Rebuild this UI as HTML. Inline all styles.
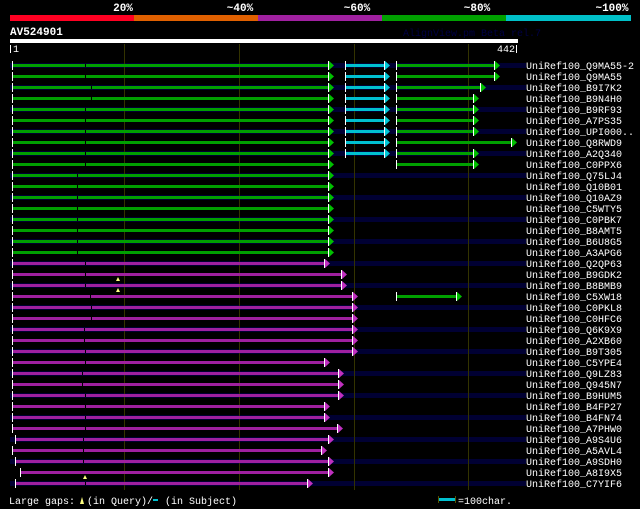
<!DOCTYPE html>
<html><head><meta charset="utf-8"><style>
html,body{margin:0;padding:0;background:#000;}
svg{display:block}
text{font-family:"Liberation Mono",monospace;}
</style></head><body>
<svg width="640" height="509" viewBox="0 0 640 509" xmlns="http://www.w3.org/2000/svg" shape-rendering="crispEdges">
<rect width="640" height="509" fill="#000"/>
<rect x="10" y="15" width="124" height="6" fill="#ff0022"/>
<rect x="134" y="15" width="124" height="6" fill="#e06000"/>
<rect x="258" y="15" width="124" height="6" fill="#a020a0"/>
<rect x="382" y="15" width="124" height="6" fill="#00a000"/>
<rect x="506" y="15" width="125" height="6" fill="#00c0c8"/>
<g fill="#fff" font-weight="bold" font-size="11" text-anchor="middle">
<text x="123" y="11">20%</text><text x="240" y="11">~40%</text><text x="357" y="11">~60%</text><text x="477" y="11">~80%</text><text x="612" y="11">~100%</text>
</g>
<text x="10" y="35" fill="#fff" font-weight="bold" font-size="11">AV524901</text>
<text x="403" y="36" fill="#000044" font-size="10">AlignView.pm Beta rel.7</text>
<rect x="10" y="39" width="508" height="4" fill="#fff"/>
<rect x="10" y="45" width="1" height="8" fill="#fff"/>
<text x="13" y="52" fill="#fff" font-size="10">1</text>
<rect x="516" y="45" width="1" height="8" fill="#fff"/>
<text x="515" y="52" fill="#fff" font-size="10" text-anchor="end">442</text>
<g fill="#000033">
<rect x="10" y="63" width="516" height="5"/><rect x="10" y="85" width="516" height="5"/><rect x="10" y="107" width="516" height="5"/><rect x="10" y="129" width="516" height="5"/><rect x="10" y="151" width="516" height="5"/><rect x="10" y="173" width="516" height="5"/><rect x="10" y="195" width="516" height="5"/><rect x="10" y="217" width="516" height="5"/><rect x="10" y="239" width="516" height="5"/><rect x="10" y="261" width="516" height="5"/><rect x="10" y="283" width="516" height="5"/><rect x="10" y="305" width="516" height="5"/><rect x="10" y="327" width="516" height="5"/><rect x="10" y="349" width="516" height="5"/><rect x="10" y="371" width="516" height="5"/><rect x="10" y="393" width="516" height="5"/><rect x="10" y="415" width="516" height="5"/><rect x="10" y="437" width="516" height="5"/><rect x="10" y="459" width="516" height="5"/><rect x="10" y="481" width="516" height="5"/>
</g>
<g fill="#333300">
<rect x="124" y="44" width="1" height="446"/><rect x="239" y="44" width="1" height="446"/><rect x="354" y="44" width="1" height="446"/><rect x="468" y="44" width="1" height="446"/>
</g>
<defs>
<g id="ag"><rect x="0" y="-4" width="1" height="9" fill="#fff"/><polygon points="1,-4 1,5 6,0.5" fill="#00c000" shape-rendering="auto"/></g>
<g id="ap"><rect x="0" y="-4" width="1" height="9" fill="#fff"/><polygon points="1,-4 1,5 6,0.5" fill="#c030c0" shape-rendering="auto"/></g>
<g id="ac"><rect x="0" y="-4" width="1" height="9" fill="#fff"/><polygon points="1,-4 1,5 6,0.5" fill="#00c8d8" shape-rendering="auto"/></g>
<rect id="tk" x="0" y="-4" width="1" height="9" fill="#fff"/>
<polygon id="ym" points="0,7 2,3 4,7" fill="#ffff80"/>
</defs>
<g>
<g transform="translate(0,65)"><rect x="12" y="-1" width="316" height="3" fill="#00a000"/><rect x="85" y="-1" width="1" height="3" fill="#000"/><use href="#tk" x="12"/><use href="#ag" x="328"/><rect x="345" y="-1" width="39" height="3" fill="#00c0d0"/><use href="#tk" x="345"/><use href="#ac" x="384"/><rect x="396" y="-1" width="98" height="3" fill="#00a000"/><use href="#tk" x="396"/><use href="#ag" x="494"/></g>
<g transform="translate(0,76)"><rect x="12" y="-1" width="316" height="3" fill="#00a000"/><rect x="85" y="-1" width="1" height="3" fill="#000"/><use href="#tk" x="12"/><use href="#ag" x="328"/><rect x="345" y="-1" width="39" height="3" fill="#00c0d0"/><use href="#tk" x="345"/><use href="#ac" x="384"/><rect x="396" y="-1" width="98" height="3" fill="#00a000"/><use href="#tk" x="396"/><use href="#ag" x="494"/></g>
<g transform="translate(0,87)"><rect x="12" y="-1" width="316" height="3" fill="#00a000"/><rect x="91" y="-1" width="1" height="3" fill="#000"/><use href="#tk" x="12"/><use href="#ag" x="328"/><rect x="345" y="-1" width="39" height="3" fill="#00c0d0"/><use href="#tk" x="345"/><use href="#ac" x="384"/><rect x="396" y="-1" width="84" height="3" fill="#00a000"/><use href="#tk" x="396"/><use href="#ag" x="480"/></g>
<g transform="translate(0,98)"><rect x="12" y="-1" width="316" height="3" fill="#00a000"/><rect x="91" y="-1" width="1" height="3" fill="#000"/><use href="#tk" x="12"/><use href="#ag" x="328"/><rect x="345" y="-1" width="39" height="3" fill="#00c0d0"/><use href="#tk" x="345"/><use href="#ac" x="384"/><rect x="396" y="-1" width="77" height="3" fill="#00a000"/><use href="#tk" x="396"/><use href="#ag" x="473"/></g>
<g transform="translate(0,109)"><rect x="12" y="-1" width="316" height="3" fill="#00a000"/><rect x="85" y="-1" width="1" height="3" fill="#000"/><use href="#tk" x="12"/><use href="#ag" x="328"/><rect x="345" y="-1" width="39" height="3" fill="#00c0d0"/><use href="#tk" x="345"/><use href="#ac" x="384"/><rect x="396" y="-1" width="77" height="3" fill="#00a000"/><use href="#tk" x="396"/><use href="#ag" x="473"/></g>
<g transform="translate(0,120)"><rect x="12" y="-1" width="316" height="3" fill="#00a000"/><rect x="85" y="-1" width="1" height="3" fill="#000"/><use href="#tk" x="12"/><use href="#ag" x="328"/><rect x="345" y="-1" width="39" height="3" fill="#00c0d0"/><use href="#tk" x="345"/><use href="#ac" x="384"/><rect x="396" y="-1" width="77" height="3" fill="#00a000"/><use href="#tk" x="396"/><use href="#ag" x="473"/></g>
<g transform="translate(0,131)"><rect x="12" y="-1" width="316" height="3" fill="#00a000"/><rect x="85" y="-1" width="1" height="3" fill="#000"/><use href="#tk" x="12"/><use href="#ag" x="328"/><rect x="345" y="-1" width="39" height="3" fill="#00c0d0"/><use href="#tk" x="345"/><use href="#ac" x="384"/><rect x="396" y="-1" width="77" height="3" fill="#00a000"/><use href="#tk" x="396"/><use href="#ag" x="473"/></g>
<g transform="translate(0,142)"><rect x="12" y="-1" width="316" height="3" fill="#00a000"/><rect x="85" y="-1" width="1" height="3" fill="#000"/><use href="#tk" x="12"/><use href="#ag" x="328"/><rect x="345" y="-1" width="39" height="3" fill="#00c0d0"/><use href="#tk" x="345"/><use href="#ac" x="384"/><rect x="396" y="-1" width="115" height="3" fill="#00a000"/><use href="#tk" x="396"/><use href="#ag" x="511"/></g>
<g transform="translate(0,153)"><rect x="12" y="-1" width="316" height="3" fill="#00a000"/><rect x="85" y="-1" width="1" height="3" fill="#000"/><use href="#tk" x="12"/><use href="#ag" x="328"/><rect x="345" y="-1" width="39" height="3" fill="#00c0d0"/><use href="#tk" x="345"/><use href="#ac" x="384"/><rect x="396" y="-1" width="77" height="3" fill="#00a000"/><use href="#tk" x="396"/><use href="#ag" x="473"/></g>
<g transform="translate(0,164)"><rect x="12" y="-1" width="316" height="3" fill="#00a000"/><rect x="85" y="-1" width="1" height="3" fill="#000"/><use href="#tk" x="12"/><use href="#ag" x="328"/><rect x="396" y="-1" width="77" height="3" fill="#00a000"/><use href="#tk" x="396"/><use href="#ag" x="473"/></g>
<g transform="translate(0,175)"><rect x="12" y="-1" width="316" height="3" fill="#00a000"/><rect x="77" y="-1" width="1" height="3" fill="#000"/><use href="#tk" x="12"/><use href="#ag" x="328"/></g>
<g transform="translate(0,186)"><rect x="12" y="-1" width="316" height="3" fill="#00a000"/><rect x="77" y="-1" width="1" height="3" fill="#000"/><use href="#tk" x="12"/><use href="#ag" x="328"/></g>
<g transform="translate(0,197)"><rect x="12" y="-1" width="316" height="3" fill="#00a000"/><rect x="77" y="-1" width="1" height="3" fill="#000"/><use href="#tk" x="12"/><use href="#ag" x="328"/></g>
<g transform="translate(0,208)"><rect x="12" y="-1" width="316" height="3" fill="#00a000"/><rect x="77" y="-1" width="1" height="3" fill="#000"/><use href="#tk" x="12"/><use href="#ag" x="328"/></g>
<g transform="translate(0,219)"><rect x="12" y="-1" width="316" height="3" fill="#00a000"/><rect x="77" y="-1" width="1" height="3" fill="#000"/><use href="#tk" x="12"/><use href="#ag" x="328"/></g>
<g transform="translate(0,230)"><rect x="12" y="-1" width="316" height="3" fill="#00a000"/><rect x="77" y="-1" width="1" height="3" fill="#000"/><use href="#tk" x="12"/><use href="#ag" x="328"/></g>
<g transform="translate(0,241)"><rect x="12" y="-1" width="316" height="3" fill="#00a000"/><rect x="77" y="-1" width="1" height="3" fill="#000"/><use href="#tk" x="12"/><use href="#ag" x="328"/></g>
<g transform="translate(0,252)"><rect x="12" y="-1" width="316" height="3" fill="#00a000"/><rect x="77" y="-1" width="1" height="3" fill="#000"/><use href="#tk" x="12"/><use href="#ag" x="328"/></g>
<g transform="translate(0,263)"><rect x="12" y="-1" width="312" height="3" fill="#a020a0"/><rect x="85" y="-1" width="1" height="3" fill="#000"/><use href="#tk" x="12"/><use href="#ap" x="324"/></g>
<g transform="translate(0,274)"><rect x="12" y="-1" width="329" height="3" fill="#a020a0"/><rect x="85" y="-1" width="1" height="3" fill="#000"/><use href="#tk" x="12"/><use href="#ap" x="341"/><use href="#ym" x="116"/></g>
<g transform="translate(0,285)"><rect x="12" y="-1" width="329" height="3" fill="#a020a0"/><rect x="85" y="-1" width="1" height="3" fill="#000"/><use href="#tk" x="12"/><use href="#ap" x="341"/><use href="#ym" x="116"/></g>
<g transform="translate(0,296)"><rect x="12" y="-1" width="340" height="3" fill="#a020a0"/><rect x="90" y="-1" width="1" height="3" fill="#000"/><use href="#tk" x="12"/><use href="#ap" x="352"/><rect x="396" y="-1" width="60" height="3" fill="#00a000"/><use href="#tk" x="396"/><use href="#ag" x="456"/></g>
<g transform="translate(0,307)"><rect x="12" y="-1" width="340" height="3" fill="#a020a0"/><rect x="91" y="-1" width="1" height="3" fill="#000"/><use href="#tk" x="12"/><use href="#ap" x="352"/></g>
<g transform="translate(0,318)"><rect x="12" y="-1" width="340" height="3" fill="#a020a0"/><rect x="91" y="-1" width="1" height="3" fill="#000"/><use href="#tk" x="12"/><use href="#ap" x="352"/></g>
<g transform="translate(0,329)"><rect x="12" y="-1" width="340" height="3" fill="#a020a0"/><rect x="84" y="-1" width="1" height="3" fill="#000"/><use href="#tk" x="12"/><use href="#ap" x="352"/></g>
<g transform="translate(0,340)"><rect x="12" y="-1" width="340" height="3" fill="#a020a0"/><rect x="84" y="-1" width="1" height="3" fill="#000"/><use href="#tk" x="12"/><use href="#ap" x="352"/></g>
<g transform="translate(0,351)"><rect x="12" y="-1" width="340" height="3" fill="#a020a0"/><rect x="85" y="-1" width="1" height="3" fill="#000"/><use href="#tk" x="12"/><use href="#ap" x="352"/></g>
<g transform="translate(0,362)"><rect x="12" y="-1" width="312" height="3" fill="#a020a0"/><rect x="85" y="-1" width="1" height="3" fill="#000"/><use href="#tk" x="12"/><use href="#ap" x="324"/></g>
<g transform="translate(0,373)"><rect x="12" y="-1" width="326" height="3" fill="#a020a0"/><rect x="82" y="-1" width="1" height="3" fill="#000"/><use href="#tk" x="12"/><use href="#ap" x="338"/></g>
<g transform="translate(0,384)"><rect x="12" y="-1" width="326" height="3" fill="#a020a0"/><rect x="82" y="-1" width="1" height="3" fill="#000"/><use href="#tk" x="12"/><use href="#ap" x="338"/></g>
<g transform="translate(0,395)"><rect x="12" y="-1" width="326" height="3" fill="#a020a0"/><rect x="85" y="-1" width="1" height="3" fill="#000"/><use href="#tk" x="12"/><use href="#ap" x="338"/></g>
<g transform="translate(0,406)"><rect x="12" y="-1" width="312" height="3" fill="#a020a0"/><rect x="85" y="-1" width="1" height="3" fill="#000"/><use href="#tk" x="12"/><use href="#ap" x="324"/></g>
<g transform="translate(0,417)"><rect x="12" y="-1" width="312" height="3" fill="#a020a0"/><rect x="85" y="-1" width="1" height="3" fill="#000"/><use href="#tk" x="12"/><use href="#ap" x="324"/></g>
<g transform="translate(0,428)"><rect x="12" y="-1" width="325" height="3" fill="#a020a0"/><rect x="85" y="-1" width="1" height="3" fill="#000"/><use href="#tk" x="12"/><use href="#ap" x="337"/></g>
<g transform="translate(0,439)"><rect x="15" y="-1" width="313" height="3" fill="#a020a0"/><rect x="83" y="-1" width="1" height="3" fill="#000"/><use href="#tk" x="15"/><use href="#ap" x="328"/></g>
<g transform="translate(0,450)"><rect x="12" y="-1" width="309" height="3" fill="#a020a0"/><rect x="83" y="-1" width="1" height="3" fill="#000"/><use href="#tk" x="12"/><use href="#ap" x="321"/></g>
<g transform="translate(0,461)"><rect x="15" y="-1" width="313" height="3" fill="#a020a0"/><rect x="83" y="-1" width="1" height="3" fill="#000"/><use href="#tk" x="15"/><use href="#ap" x="328"/></g>
<g transform="translate(0,472)"><rect x="20" y="-1" width="308" height="3" fill="#a020a0"/><use href="#tk" x="20"/><use href="#ap" x="328"/><use href="#ym" x="83"/></g>
<g transform="translate(0,483)"><rect x="15" y="-1" width="292" height="3" fill="#a020a0"/><rect x="85" y="-1" width="1" height="3" fill="#000"/><use href="#tk" x="15"/><use href="#ap" x="307"/></g>
</g>
<g fill="#fff" font-size="10">
<text x="526" y="69">UniRef100_Q9MA55-2</text>
<text x="526" y="80">UniRef100_Q9MA55</text>
<text x="526" y="91">UniRef100_B9I7K2</text>
<text x="526" y="102">UniRef100_B9N4H0</text>
<text x="526" y="113">UniRef100_B9RF93</text>
<text x="526" y="124">UniRef100_A7PS35</text>
<text x="526" y="135">UniRef100_UPI000..</text>
<text x="526" y="146">UniRef100_Q8RWD9</text>
<text x="526" y="157">UniRef100_A2Q340</text>
<text x="526" y="168">UniRef100_C0PPX6</text>
<text x="526" y="179">UniRef100_Q75LJ4</text>
<text x="526" y="190">UniRef100_Q10B01</text>
<text x="526" y="201">UniRef100_Q10AZ9</text>
<text x="526" y="212">UniRef100_C5WTY5</text>
<text x="526" y="223">UniRef100_C0PBK7</text>
<text x="526" y="234">UniRef100_B8AMT5</text>
<text x="526" y="245">UniRef100_B6U8G5</text>
<text x="526" y="256">UniRef100_A3APG6</text>
<text x="526" y="267">UniRef100_Q2QP63</text>
<text x="526" y="278">UniRef100_B9GDK2</text>
<text x="526" y="289">UniRef100_B8BMB9</text>
<text x="526" y="300">UniRef100_C5XW18</text>
<text x="526" y="311">UniRef100_C0PKL8</text>
<text x="526" y="322">UniRef100_C0HFC6</text>
<text x="526" y="333">UniRef100_Q6K9X9</text>
<text x="526" y="344">UniRef100_A2XB60</text>
<text x="526" y="355">UniRef100_B9T305</text>
<text x="526" y="366">UniRef100_C5YPE4</text>
<text x="526" y="377">UniRef100_Q9LZ83</text>
<text x="526" y="388">UniRef100_Q945N7</text>
<text x="526" y="399">UniRef100_B9HUM5</text>
<text x="526" y="410">UniRef100_B4FP27</text>
<text x="526" y="421">UniRef100_B4FN74</text>
<text x="526" y="432">UniRef100_A7PHW0</text>
<text x="526" y="443">UniRef100_A9S4U6</text>
<text x="526" y="454">UniRef100_A5AVL4</text>
<text x="526" y="465">UniRef100_A9SDH0</text>
<text x="526" y="476">UniRef100_A8I9X5</text>
<text x="526" y="487">UniRef100_C7YIF6</text>
</g>
<text x="9" y="504" fill="#fff" font-size="10">Large gaps:</text>
<polygon points="80,504 82,497 84,504" fill="#ffff80" shape-rendering="auto"/>
<text x="87" y="504" fill="#fff" font-size="10">(in Query)/</text>
<rect x="153" y="499" width="5" height="2" fill="#00c0d0"/>
<text x="165" y="504" fill="#fff" font-size="10">(in Subject)</text>
<rect x="438" y="496" width="1" height="7" fill="#555500"/>
<rect x="439" y="498" width="16" height="3" fill="#00c0d0"/>
<rect x="455" y="496" width="1" height="7" fill="#555500"/>
<text x="458" y="504" fill="#fff" font-size="10">=100char.</text>
</svg>
</body></html>
